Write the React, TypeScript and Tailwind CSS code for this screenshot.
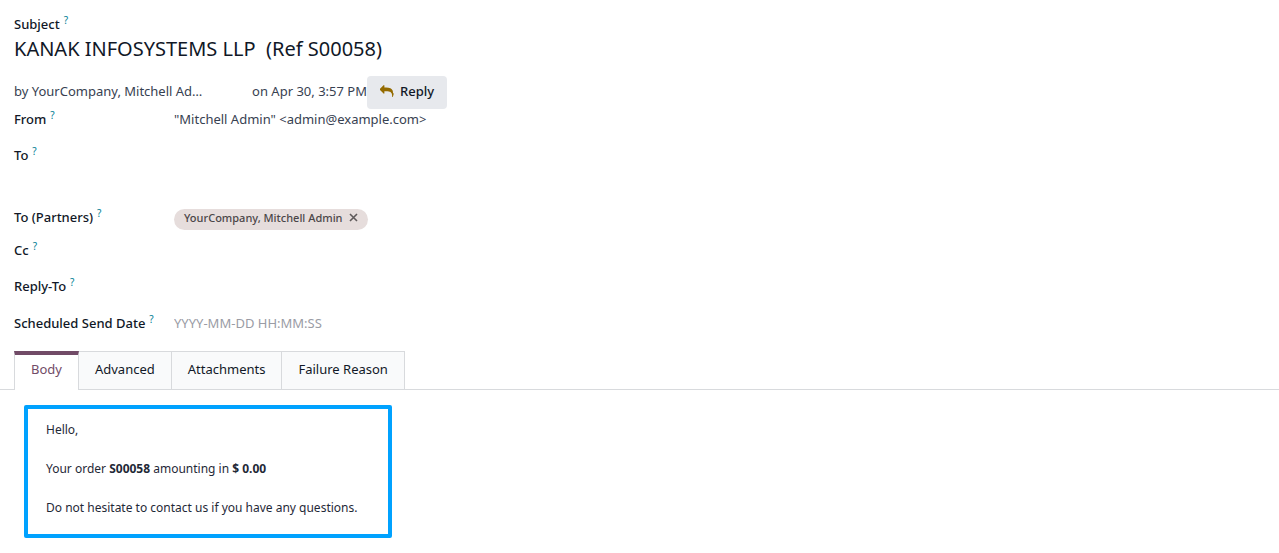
import { useState } from "react";
import type { ReactNode } from "react";

const TABS = ["Body", "Advanced", "Attachments", "Failure Reason"];

function Label({ htmlFor, children }: { htmlFor: string; children: ReactNode }) {
  return (
    <label
      htmlFor={htmlFor}
      className="flex items-start gap-1 font-medium leading-5 text-[#111827]"
    >
      {children}
      <span className="text-[10px] font-normal leading-3 text-[#017e94]">?</span>
    </label>
  );
}

function Field({
  id,
  label,
  className,
  children,
}: {
  id: string;
  label: string;
  className: string;
  children: ReactNode;
}) {
  return (
    <div className={`flex items-start ${className}`}>
      <div className="w-40 shrink-0">
        <Label htmlFor={id}>{label}</Label>
      </div>
      <div className="flex min-w-0 flex-1">{children}</div>
    </div>
  );
}

function ReplyIcon() {
  return (
    <svg viewBox="0 0 1792 1600" className="h-3 w-3.5 fill-[#946b00]" aria-hidden="true">
      <path d="M1792 1120q0 166-127 451-3 7-10.5 24t-13.5 30-13 22q-12 17-28 17-15 0-23.5-10t-8.5-25q0-9 2.5-26.5t2.5-23.5q5-68 5-123 0-112-19.5-200.5t-54-153.5-89-112-120-78.5-149.5-47-174-22-200-6.5h-224v256q0 26-19 45t-45 19-45-19l-512-512q-19-19-19-45t19-45l512-512q19-19 45-19t45 19 19 45v256h224q713 0 875 403 53 134 53 333z" />
    </svg>
  );
}

const inputClass = "w-full bg-transparent leading-5 outline-none placeholder:text-[#9a9ca5]";

export default function App() {
  const [tab, setTab] = useState("Body");
  const [partners, setPartners] = useState(["YourCompany, Mitchell Admin"]);

  return (
    <main className="bg-white pt-3.5 font-['Noto_Sans','Open_Sans',sans-serif] text-[13px] leading-5 text-[#374151]">
      <form className="px-3.5" onSubmit={(e) => e.preventDefault()}>
        <Label htmlFor="subject">Subject</Label>
        <input
          id="subject"
          className="block w-full bg-transparent text-xl leading-[30px] text-[#111827] outline-none"
          defaultValue="KANAK INFOSYSTEMS LLP  (Ref S00058)"
        />

        <div className="mt-3 flex items-center">
          <div className="flex w-[353px] justify-between pb-1 whitespace-nowrap">
            <span>by YourCompany, Mitchell Ad…</span>
            <span>on Apr 30, 3:57 PM</span>
          </div>
          <button
            type="button"
            className="flex h-[33px] items-center gap-1.5 rounded bg-[#e7e9ed] px-[13px] pb-1 font-medium text-[#111827]"
          >
            <ReplyIcon />
            Reply
          </button>
        </div>

        <Field id="from" label="From" className="h-9">
          <input
            id="from"
            className={inputClass}
            defaultValue={'"Mitchell Admin" <admin@example.com>'}
          />
        </Field>
        <Field id="to" label="To" className="h-[62px]">
          <textarea id="to" rows={2} className={`resize-none ${inputClass}`} />
        </Field>
        <Field id="partners" label="To (Partners)" className="h-[33px]">
          {partners.map((name) => (
            <span
              key={name}
              className="mt-0.5 flex h-[21px] shrink-0 items-center gap-1.5 rounded-full bg-[#e6dddc] px-2.5 pb-1 text-[11px] font-medium text-[#4b4648]"
            >
              {name}
              <button
                type="button"
                aria-label="Delete"
                onClick={() => setPartners(partners.filter((p) => p !== name))}
              >
                <svg
                  viewBox="0 0 9 9"
                  className="size-[9px] stroke-[#5f5a5b] stroke-[1.6]"
                  aria-hidden="true"
                >
                  <path d="M1 1l7 7M8 1l-7 7" />
                </svg>
              </button>
            </span>
          ))}
          <input id="partners" className={inputClass} />
        </Field>
        <Field id="cc" label="Cc" className="h-9">
          <input id="cc" className={inputClass} />
        </Field>
        <Field id="reply-to" label="Reply-To" className="h-[37px]">
          <input id="reply-to" className={inputClass} />
        </Field>
        <Field id="scheduled" label="Scheduled Send Date" className="h-[38px]">
          <input id="scheduled" className={inputClass} placeholder="YYYY-MM-DD HH:MM:SS" />
        </Field>
      </form>

      <div role="tablist" className="flex border-b border-[#d8dadd] px-3.5">
        {TABS.map((name) => (
          <button
            key={name}
            type="button"
            role="tab"
            aria-selected={tab === name}
            onClick={() => setTab(name)}
            className={
              tab === name
                ? "-mb-px h-[39px] border-x border-t-4 border-x-[#d8dadd] border-t-[#714b67] bg-white px-4 pb-2 text-[#714b67]"
                : "h-[38px] border-t border-r border-[#d8dadd] bg-[#f9fafb] px-4 pb-1 text-[#111827]"
            }
          >
            {name}
          </button>
        ))}
      </div>

      <section role="tabpanel" className="flex px-6 py-[15px]">
        <div className="flex w-[368px] flex-col gap-[19px] rounded-xs border-4 border-[#00a2ff] px-[18px] pt-[11px] pb-4 text-xs leading-5 text-[#1f2937]">
          <p>Hello,</p>
          <p>
            Your order <strong>S00058</strong> amounting in <strong>$ 0.00</strong>
          </p>
          <p>Do not hesitate to contact us if you have any questions.</p>
        </div>
      </section>
    </main>
  );
}
